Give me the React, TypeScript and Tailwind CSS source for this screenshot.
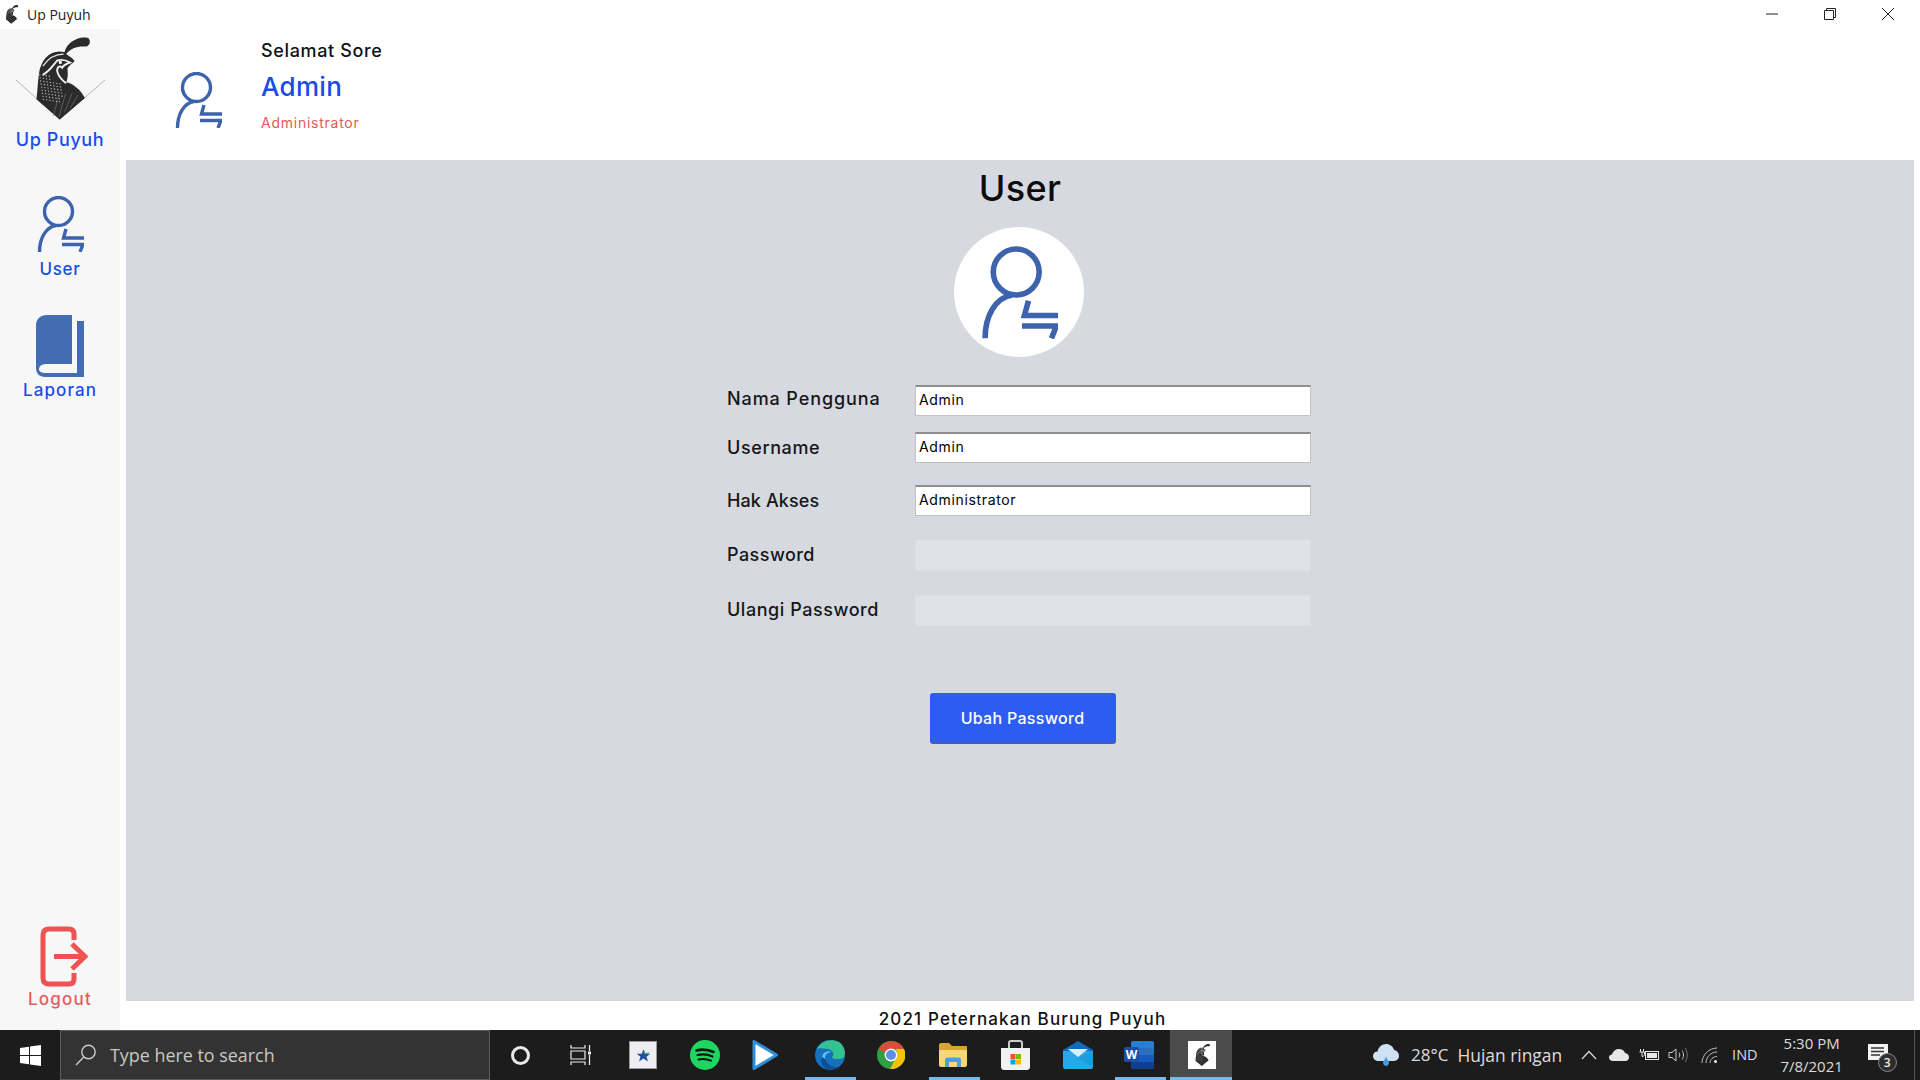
import React from "react";

const UserIcon = ({ className }: { className: string }) => (
  <svg viewBox="0 0 47 56" fill="none" stroke="#3d63ad" strokeWidth="3.4" className={className}>
    <circle cx="21.5" cy="15.5" r="14" />
    <path d="M2.5 56C2.5 42 9 31 19 29.5" />
    <path d="M29 33L26.5 42H47" />
    <path d="M25 48.5H46L43 56" />
  </svg>
);

const BookIcon = () => (
  <svg viewBox="0 0 48 62" className="w-[48px] h-[62px]">
    <path fill="#436cb3" d="M11 0H36V49H10C5 49 3 52 3 54C3 57 6 58 10 58H41V6H48V62H9C3 62 0 58 0 53V11C0 4 4 0 11 0Z" />
  </svg>
);

const LogoutIcon = () => (
  <svg viewBox="0 0 48 61" fill="none" stroke="#ee5353" strokeWidth="5" className="w-[48px] h-[61px] ml-[7px]">
    <path d="M34 14V8C34 4.5 32.5 3 29 3H9C5 3 3 5 3 9V52C3 56 5 58 9 58H29C32.5 58 34 56.5 34 53V47" />
    <path d="M14 30.5H44" />
    <path d="M32 18L45 30.5L32 43" />
  </svg>
);

const dots: [number, number][] = [];
for (let r = 0; r < 9; r++) {
  for (let c = 0; c < 8 - Math.floor(r / 4); c++) {
    const x = 118 + c * 10 + r * 1.5;
    const y = 142 + r * 9.5 + c * 1.5;
    if (x < 188 && !(r < 2 && c > 3)) dots.push([x, y]);
  }
}

const Quail = ({ className, lines = true }: { className: string; lines?: boolean }) => (
  <svg viewBox={lines ? "45 25 275 257" : "100 25 180 257"} className={className}>
    {lines && <path d="M45 158L180 280L320 158" fill="none" stroke="#777" strokeWidth="1.6" />}
    <path fill="#2b2b2b" d="M108 218C112 190 112 165 116 138C122 96 150 62 195 72C200 45 235 20 268 28C278 38 272 52 262 55C240 52 215 58 200 78C210 85 222 92 226 100C218 108 210 112 204 122C206 140 205 155 200 165C225 170 245 190 258 214L180 280Z" />
    <path d="M128 115C145 90 170 78 192 78" fill="none" stroke="#e8e8e8" strokeWidth="4" />
    <path d="M128 142C150 130 160 112 172 98C190 92 205 100 212 104C200 108 192 112 188 120C178 112 172 120 172 130C176 148 186 158 200 168" fill="none" stroke="#f0f0f0" strokeWidth="6" />
    <circle cx="182" cy="104" r="5" fill="#fff" />
    {dots.map(([x, y], i) => (
      <circle key={i} cx={x} cy={y} r="2" fill="#ccc" />
    ))}
    <path d="M160 270L178 205M178 272L198 200M195 258L218 200M212 245L236 205" fill="none" stroke="#777" strokeWidth="2" />
  </svg>
);

const Field = ({ label, value, disabled, cls, labelCls }: { label: string; value?: string; disabled?: boolean; cls: string; labelCls: string }) => (
  <div className={`flex items-center ${cls}`}>
    <div className={`w-[188px] text-[18px] leading-[24px] font-medium text-[#161616] ${labelCls}`}>{label}</div>
    {disabled ? (
      <div className="w-[396px] h-[31px] bg-[#dfe2e7] border border-[#dcdfe4]" />
    ) : (
      <input
        readOnly
        value={value}
        className="w-[396px] h-[31px] bg-white border border-[#c2c2c2] border-t-2 border-t-[#8e8e8e] px-[3px] pb-[3px] text-[14px] tracking-[0.65px] text-black outline-none font-[Inter,sans-serif]"
      />
    )}
  </div>
);

const NavItem = ({ icon, label, cls, labelCls }: { icon: React.ReactNode; label: string; cls: string; labelCls: string }) => (
  <div className={`flex flex-col items-center ${cls}`}>{icon}<span className={`text-[17px] leading-[22px] font-medium ${labelCls}`}>{label}</span></div>
);

const Cell = ({ children, active, running }: { children: React.ReactNode; active?: boolean; running?: boolean }) => (
  <div className={`relative w-[62px] h-full flex items-center justify-center ${active ? "bg-[#4b4b4b]" : ""}`}>
    {children}
    {running && <div className={`absolute bottom-0 h-[3px] bg-[#76b9ed] ${active ? "left-0 right-0" : "left-[7px] right-[4px]"}`} />}
  </div>
);

export default function App() {
  return (
    <div className="w-[1920px] h-[1080px] flex flex-col overflow-hidden bg-white font-[Inter,sans-serif]">
      {/* title bar */}
      <div className="h-[29px] flex items-center justify-between bg-white shrink-0">
        <div className="flex items-center pl-[5px]">
          <Quail className="w-[14px] h-[19px]" lines={false} />
          <span className="ml-[8px] text-[14px] text-[#222] font-['Open_Sans',sans-serif]">Up Puyuh</span>
        </div>
        <div className="flex items-center pr-[3px] -mt-[2px]">
          <div className="w-[58px] h-[29px] flex items-center justify-center">
            <svg width="14" height="14" viewBox="0 0 14 14"><path d="M1 7H13" stroke="#222" strokeWidth="1" /></svg>
          </div>
          <div className="w-[58px] h-[29px] flex items-center justify-center">
            <svg width="14" height="14" viewBox="0 0 14 14" fill="none" stroke="#222"><path d="M1.5 3.5H10.5V12.5H1.5Z" /><path d="M3.5 3.5V1.5H12.5V10.5H10.5" /></svg>
          </div>
          <div className="w-[58px] h-[29px] flex items-center justify-center">
            <svg width="14" height="14" viewBox="0 0 14 14" fill="none" stroke="#222"><path d="M1 1L13 13M13 1L1 13" /></svg>
          </div>
        </div>
      </div>

      <div className="h-[1001px] flex shrink-0">
        {/* sidebar */}
        <aside className="w-[120px] bg-[#f7f7f8] flex flex-col items-center shrink-0">
          <div className="pt-[7px] flex flex-col items-center text-[#1a4de6]">
            <Quail className="w-[89px] h-[85px]" />
            <span className="mt-[7px] text-[18px] leading-[24px] font-medium tracking-[0.6px]">Up Puyuh</span>
          </div>
          <NavItem cls="mt-[44px] text-[#1a4de6] gap-[6px]" labelCls="tracking-[0.7px]" icon={<UserIcon className="w-[47px] h-[56px]" />} label="User" />
          <NavItem cls="mt-[35px] text-[#1a4de6] gap-[2px]" labelCls="tracking-[1.1px]" icon={<BookIcon />} label="Laporan" />
          <div className="flex-1" />
          <NavItem cls="mb-[20px] text-[#e65a5a] gap-[1px]" labelCls="tracking-[1.2px]" icon={<LogoutIcon />} label="Logout" />
        </aside>

        {/* content */}
        <div className="flex-1 flex flex-col pl-[6px] pr-[6px]">
          <header className="h-[131px] flex shrink-0">
            <div className="pl-[49px] pt-[43px]"><UserIcon className="w-[47px] h-[56px]" /></div>
            <div className="ml-[39px] flex flex-col pt-[10px]">
              <span className="text-[18px] leading-[24px] font-medium tracking-[0.65px] text-[#111]">Selamat Sore</span>
              <span className="mt-[8px] text-[26px] leading-[32px] font-medium tracking-[0.3px] text-[#1a4de6]">Admin</span>
              <span className="mt-[10px] text-[14px] leading-[20px] tracking-[0.75px] text-[#e05a5a]">Administrator</span>
            </div>
          </header>
          <main className="h-[841px] bg-[#d6d9e0] flex flex-col items-center pt-[6px] shrink-0">
            <h1 className="h-[44px] text-[36px] leading-[44px] font-medium text-[#0c0c0c] tracking-[0.3px]">User</h1>
            <div className="mt-[17px] w-[130px] h-[130px] rounded-full bg-white flex items-center justify-center -translate-x-[1px]">
              <UserIcon className="w-[77px] h-[93px]" />
            </div>
            <div className="mt-[28px] w-[584px] flex flex-col -translate-x-[1px]">
              <Field cls="" labelCls="tracking-[0.9px] pb-[3px]" label="Nama Pengguna" value="Admin" />
              <Field cls="mt-[16px]" labelCls="tracking-[0.6px]" label="Username" value="Admin" />
              <Field cls="mt-[22px]" labelCls="tracking-[0.1px]" label="Hak Akses" value="Administrator" />
              <Field cls="mt-[24px]" labelCls="tracking-[0.45px] pb-[2px]" label="Password" disabled />
              <Field cls="mt-[24px]" labelCls="tracking-[0.55px] pb-[2px]" label="Ulangi Password" disabled />
            </div>
            <button className="mt-[67px] ml-[5px] w-[186px] h-[51px] rounded-[3px] bg-[#2d5cf2] border-b-2 border-b-[#3f5fb8] text-white text-[16px] font-medium tracking-[0.3px] flex items-center justify-center">
              Ubah Password
            </button>
          </main>
          <footer className="h-[29px] pt-[8px] pl-[5px] flex items-center justify-center text-[17px] leading-[21px] font-medium tracking-[1.15px] text-[#111] shrink-0">
            2021 Peternakan Burung Puyuh
          </footer>
        </div>
      </div>

      {/* taskbar */}
      <div className="h-[50px] bg-[#1c1c1c] flex items-center shrink-0 font-['Open_Sans',sans-serif] relative">
        <div className="w-[60px] h-full flex items-center justify-center">
          <svg width="21" height="21" viewBox="0 0 21 21" fill="#fff"><path d="M0 3L9 1.7V10H0ZM10 1.5L21 0V10H10ZM0 11H9V19.3L0 18ZM10 11H21V21L10 19.5Z" /></svg>
        </div>
        <div className="w-[430px] h-full bg-[#333] border border-[#5c5c5c] flex items-center pl-[14px]">
          <svg width="22" height="22" viewBox="0 0 22 22" fill="none" stroke="#ccc" strokeWidth="1.4"><circle cx="13.5" cy="8" r="6.7" /><path d="M8.8 13L1 21" /></svg>
          <span className="ml-[13px] text-[17.9px] text-[#c9c9c0]">Type here to search</span>
        </div>
        <div className="w-[60px] h-full flex items-center justify-center">
          <div className="w-[19px] h-[19px] rounded-full border-[3px] border-[#e8e8e8]" />
        </div>
        <div className="w-[62px] h-full flex items-center justify-center">
          <svg width="22" height="20" viewBox="0 0 22 20" fill="none" stroke="#eee" strokeWidth="1.2"><path d="M1 0V3H15V0M1 20V17H15V20M1 6H15V14H1Z" /><path d="M19.5 0V6M19.5 10V20" /><rect x="18" y="6.5" width="3" height="3" fill="#eee" stroke="none" /></svg>
        </div>
        <Cell>
          <div className="w-[28px] h-[28px] bg-[#eeeef2] border border-[#999] flex items-center justify-center">
            <svg width="15" height="15" viewBox="0 0 20 20"><path fill="#1f4fa8" d="M10 2L12.5 7.5H19L14 11.5L16 18L10 14L4 18L6 11.5L1 7.5H7.5Z" /><path fill="#2e8b57" d="M10 2L12.5 7.5L18 5C15 8 13 10 10 8Z" /></svg>
          </div>
        </Cell>
        <Cell>
          <svg width="30" height="30" viewBox="0 0 30 30" fill="none" stroke="#111" strokeLinecap="round"><circle cx="15" cy="15" r="15" fill="#1ed760" stroke="none" /><path d="M6.5 10.5C12 9 18 9.5 23.5 12" strokeWidth="2.6" /><path d="M7.5 15C12 14 18 14.3 22.5 16.5" strokeWidth="2.2" /><path d="M8.5 19.5C12 18.7 17 19 21 20.7" strokeWidth="1.9" /></svg>
        </Cell>
        <Cell>
          <svg className="-ml-[4px]" width="26" height="30" viewBox="0 0 26 30"><path d="M2 1.5V28.5L24.5 15Z" fill="#fff" stroke="#2f8fdc" strokeWidth="3" strokeLinejoin="round" /></svg>
        </Cell>
        <Cell running>
          <svg className="ml-[2px]" width="30" height="30" viewBox="0 0 30 30"><circle cx="15" cy="15" r="15" fill="#1570bd" /><path fill="#34c38f" d="M2 9C6 1 16-2 24 2C30 6 31 13 29 17C26 20 18 20 17 17C20 14 18 10 13 9C8 8 4 8 2 9Z" /><path fill="#0c4f96" d="M10 15C9 22 15 28 24 27C20 30 12 31 8 26C5 22 6 17 10 15Z" /><path fill="#5cc0f0" d="M7 17C8 12 13 10 17 12C13 12 10 14 10 19Z" /></svg>
        </Cell>
        <Cell>
          <svg width="28" height="28" viewBox="0 0 28 28"><circle cx="14" cy="14" r="14" fill="#2f9e44" /><path fill="#dd4b39" d="M2 8A14 14 0 0 1 27 8H14A6 6 0 0 0 8.5 12Z" /><path fill="#f4c20d" d="M27 8A14 14 0 0 1 13 28L19 17A6 6 0 0 0 18 8Z" /><circle cx="14" cy="14" r="6.5" fill="#fff" /><circle cx="14" cy="14" r="5" fill="#5b8fe8" /></svg>
        </Cell>
        <Cell running>
          <svg width="28" height="24" viewBox="0 0 28 24"><path fill="#d9a531" d="M0 2C0 1 1 0 2 0H10L13 3H27C27.6 3 28 3.4 28 4V8H0Z" /><path fill="#f8d775" d="M0 7H28V22C28 23 27 24 26 24H2C1 24 0 23 0 22Z" /><path fill="#4f9fd9" d="M6 24V17C6 15.5 7 14.5 8.5 14.5H19.5C21 14.5 22 15.5 22 17V24H18V19H10V24Z" /></svg>
        </Cell>
        <Cell>
          <svg width="29" height="30" viewBox="0 0 29 30"><path fill="none" stroke="#ccc" strokeWidth="2" d="M8 9V3C8 1.5 9 1 10 1H19C20 1 21 1.5 21 3V9" /><path fill="#f2f2f2" d="M0 8H29V27C29 28.5 28 30 26 30H3C1 30 0 28.5 0 27Z" /><rect x="9.5" y="14" width="5" height="5" fill="#f25022" /><rect x="15" y="14" width="5" height="5" fill="#7fba00" /><rect x="9.5" y="19.5" width="5" height="5" fill="#00a4ef" /><rect x="15" y="19.5" width="5" height="5" fill="#ffb900" /></svg>
        </Cell>
        <Cell>
          <svg className="ml-[2px]" width="30" height="28" viewBox="0 0 30 28"><path fill="#0f6cbd" d="M15 0L30 9V11H0V9Z" /><path fill="#28a8ea" d="M0 10H30V26C30 27 29 28 28 28H2C1 28 0 27 0 26Z" /><path fill="#d8f0fb" d="M5 8H25L15 16Z" /><path fill="#0f8fd8" d="M15 17L30 9V26L15 17Z" opacity=".45" /></svg>
        </Cell>
        <Cell running>
          <svg width="30" height="28" viewBox="0 0 30 28"><rect x="7" y="0" width="23" height="28" rx="2" fill="#2b7cd3" /><rect x="7" y="7" width="23" height="7" fill="#2b6fc0" /><rect x="7" y="14" width="23" height="7" fill="#185abd" /><path d="M7 21H30V26C30 27 29 28 28 28H9C8 28 7 27 7 26Z" fill="#103f91" /><rect x="0" y="6" width="15" height="15" rx="1.5" fill="#1a4fa6" /><text x="7.5" y="17.5" textAnchor="middle" fontSize="12" fontWeight="700" fill="#fff" fontFamily="'Open Sans',sans-serif">W</text></svg>
        </Cell>
        <Cell active running>
          <div className="w-[28px] h-[28px] bg-white flex items-center justify-center ml-[1px]">
            <Quail className="w-[24px] h-[24px]" />
          </div>
        </Cell>

        {/* tray */}
        <div className="flex-1 h-full flex items-center text-[#dcdcdc]">
          <div className="ml-[141px] w-[26px] flex justify-center">
            <svg width="26" height="22" viewBox="0 0 26 22"><path fill="#cfe2f5" d="M6 17C2.5 17 0 15 0 12C0 9.5 2 7.5 4.5 7.5C5.5 3 9 0 13 0C17 0 20 2.5 21 6C24 6.5 26 9 26 12C26 15 23.5 17 20 17Z" /><path fill="#4a9ae0" d="M13 13L16 18C16 20.5 14.5 22 13 22C11.500 22 10 20.500 10 18Z" /></svg>
          </div>
          <span className="ml-[12px] text-[17px] whitespace-nowrap">28°C</span>
          <span className="ml-[9px] text-[17.4px] whitespace-nowrap">Hujan ringan</span>
          <svg className="ml-[19px]" width="16" height="10" viewBox="0 0 16 10" fill="none" stroke="#ddd" strokeWidth="1.2"><path d="M1 9L8 1.5L15 9" /></svg>
          <svg className="ml-[12px]" width="20" height="12" viewBox="0 0 20 12"><path fill="#e6e6e6" d="M4 12C1.5 12 0 10.5 0 8.5C0 6.5 1.5 5.5 3 5.5C4 2 7 0 10 0C13 0 15 1.5 16 4C18.5 4.5 20 6 20 8.3C20 10.5 18.5 12 16.5 12Z" /></svg>
          <svg className="ml-[10px]" width="20" height="14" viewBox="0 0 20 14" fill="none" stroke="#e6e6e6"><path d="M1.5 1V4M4.5 1V4M0.5 4H5.5V6.5C5.5 8 4 8.5 3 8.5V4" /><rect x="6.5" y="3.5" width="13" height="8" /><rect x="8" y="5" width="10" height="5" fill="#e6e6e6" stroke="none" /></svg>
          <svg className="ml-[9px]" width="20" height="16" viewBox="0 0 20 16" fill="none" stroke="#ccc"><path d="M1 5.5V10.5H4L8 14V2L4 5.5Z" /><path d="M11 5.5C12 7 12 9 11 10.5M14 3.5C16 6 16 10 14 12.5" /><path d="M17 1C20 5 20 11 17 15" stroke="#777" /></svg>
          <svg className="ml-[13px]" width="17" height="17" viewBox="0 0 17 17" fill="none" stroke="#bbb"><path d="M1 16C1 8 8 1 16 1M5 16C5 10 10 5 16 5M9 16C9 12.5 12 9.5 16 9.5" /><circle cx="14.5" cy="14.5" r="1.5" fill="#eee" stroke="none" /></svg>
          <span className="ml-[14px] text-[14.5px]">IND</span>
          <div className="ml-[13px] w-[82px] flex flex-col items-center text-[15px] leading-[23px]">
            <span>5:30 PM</span>
            <span>7/8/2021</span>
          </div>
          <div className="relative ml-[15px] w-[24px] h-[24px] mt-[2px]">
            <svg width="22" height="20" viewBox="0 0 22 20"><path fill="#f2f2f2" d="M0 0H20V16H0Z" /><path d="M3 4H16M3 7.5H16M3 11H12" stroke="#333" strokeWidth="1.3" /></svg>
            <div className="absolute left-[10px] top-[9px] w-[19px] h-[19px] rounded-full bg-[#2e2e2e] border border-[#888] flex items-center justify-center text-[12px] font-semibold text-[#eee]">3</div>
          </div>
        </div>
        <div className="absolute right-[5px] top-0 bottom-0 w-px bg-[#555]" />
      </div>
    </div>
  );
}
